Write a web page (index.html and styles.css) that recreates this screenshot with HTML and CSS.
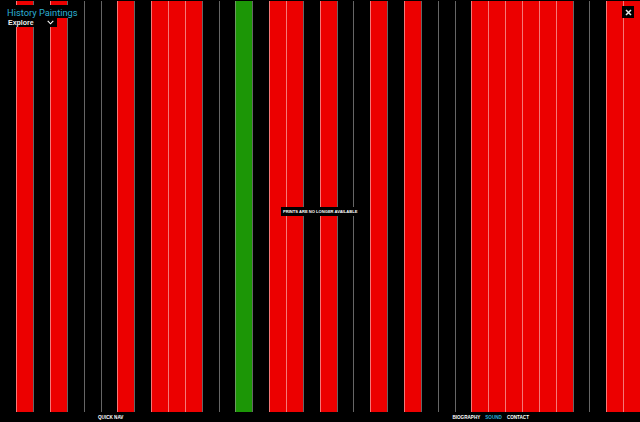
FILE: index.html
```html
<!DOCTYPE html>
<html lang="en">

<head>
    <meta charset="UTF-8">
    <meta name="viewport" content="width=device-width, initial-scale=1.0">
    <title>History Paintings</title>
    <link rel="stylesheet" href="styles.css">
</head>

<body>
    <div class="strips">
        <div class="strip"></div>
        <div class="strip red"></div>
        <div class="strip"></div>
        <div class="strip red"></div>
        <div class="strip"></div>
        <div class="strip"></div>
        <div class="strip"></div>
        <div class="strip red"></div>
        <div class="strip"></div>
        <div class="strip red"></div>
        <div class="strip red"></div>
        <div class="strip red"></div>
        <div class="strip"></div>
        <div class="strip"></div>
        <div class="strip green"></div>
        <div class="strip"></div>
        <div class="strip red"></div>
        <div class="strip red"></div>
        <div class="strip"></div>
        <div class="strip red"></div>
        <div class="strip"></div>
        <div class="strip"></div>
        <div class="strip red"></div>
        <div class="strip"></div>
        <div class="strip red"></div>
        <div class="strip"></div>
        <div class="strip"></div>
        <div class="strip"></div>
        <div class="strip red"></div>
        <div class="strip red"></div>
        <div class="strip red"></div>
        <div class="strip red"></div>
        <div class="strip red"></div>
        <div class="strip red"></div>
        <div class="strip"></div>
        <div class="strip"></div>
        <div class="strip red"></div>
        <div class="strip red"></div>
    </div>

    <div class="title">
        <h1>History Paintings</h1>
        <div class="explore">
            <span>Explore</span>
            <svg width="7" height="5" viewBox="0 0 7 5"><path d="M.7 .8l2.8 3 2.8-3" fill="none" stroke="#fff" stroke-width="1.1"/></svg>
        </div>
    </div>

    <button class="close">
        <svg width="7" height="7" viewBox="0 0 7 7"><path d="M1 1l5 5M6 1L1 6" stroke="#e8e8e8" stroke-width="1.5"/></svg>
    </button>

    <div class="notice">PRINTS ARE NO LONGER AVAILABLE</div>

    <div class="footer">
        <a>QUICK NAV</a>
        <nav>
            <a>BIOGRAPHY</a>
            <a class="on">SOUND</a>
            <a>CONTACT</a>
        </nav>
    </div>
</body>

</html>
```

FILE: styles.css
```css
html,
body {
    width: 100%;
    height: 100%;
    margin: 0;
    padding: 0;
    background-color: black;
    overflow: hidden;
    font-family: "Liberation Sans", sans-serif;
}

body {
    display: flex;
    flex-direction: column;
    padding-top: 1px;
    box-sizing: border-box;
}

.strips {
    display: grid;
    grid-template-columns: repeat(38, 1fr);
    width: 640.5px;
    height: 411px;
    margin-left: -0.5px;
}

.strip {
    box-sizing: border-box;
    border-left: 1px solid #666;
}

.strip:first-child {
    border-left: 0;
}

.red {
    background-color: #ec0000;
    border-left-color: #f47878;
}

.green {
    background-color: #1c9606;
    border-left-color: #6c9a60;
}

.title {
    position: absolute;
    top: 5px;
    left: 0;
}

.title h1 {
    width: 80px;
    height: 13px;
    margin: 0;
    padding-left: 7px;
    box-sizing: border-box;
    font-family: Roboto, sans-serif;
    font-size: 9.3px;
    font-weight: 400;
    line-height: 15px;
    color: #2cb0d4;
    background-color: black;
}

.explore {
    display: flex;
    align-items: center;
    justify-content: space-between;
    width: 57px;
    height: 9px;
    padding: 0 3px 0 8px;
    box-sizing: border-box;
    background-color: black;
    color: #eee;
    font-size: 7px;
    font-weight: bold;
}

.close {
    position: absolute;
    top: 6px;
    right: 6px;
    display: flex;
    align-items: center;
    justify-content: center;
    width: 12px;
    height: 12px;
    padding: 0;
    border: 0;
    background-color: black;
}

.notice {
    position: absolute;
    top: 207px;
    left: 281px;
    height: 9px;
    padding: 0 2px;
    line-height: 9px;
    background-color: black;
    color: white;
    font-size: 4.1px;
    font-weight: bold;
    white-space: nowrap;
}

.footer {
    display: flex;
    flex: 1;
    align-items: center;
    justify-content: space-between;
    padding: 0 111px 0 98px;
    font-size: 4.6px;
    font-weight: bold;
    color: white;
}

.footer nav {
    display: flex;
    gap: 5px;
}

.on {
    color: #2cb0d4;
}
```
